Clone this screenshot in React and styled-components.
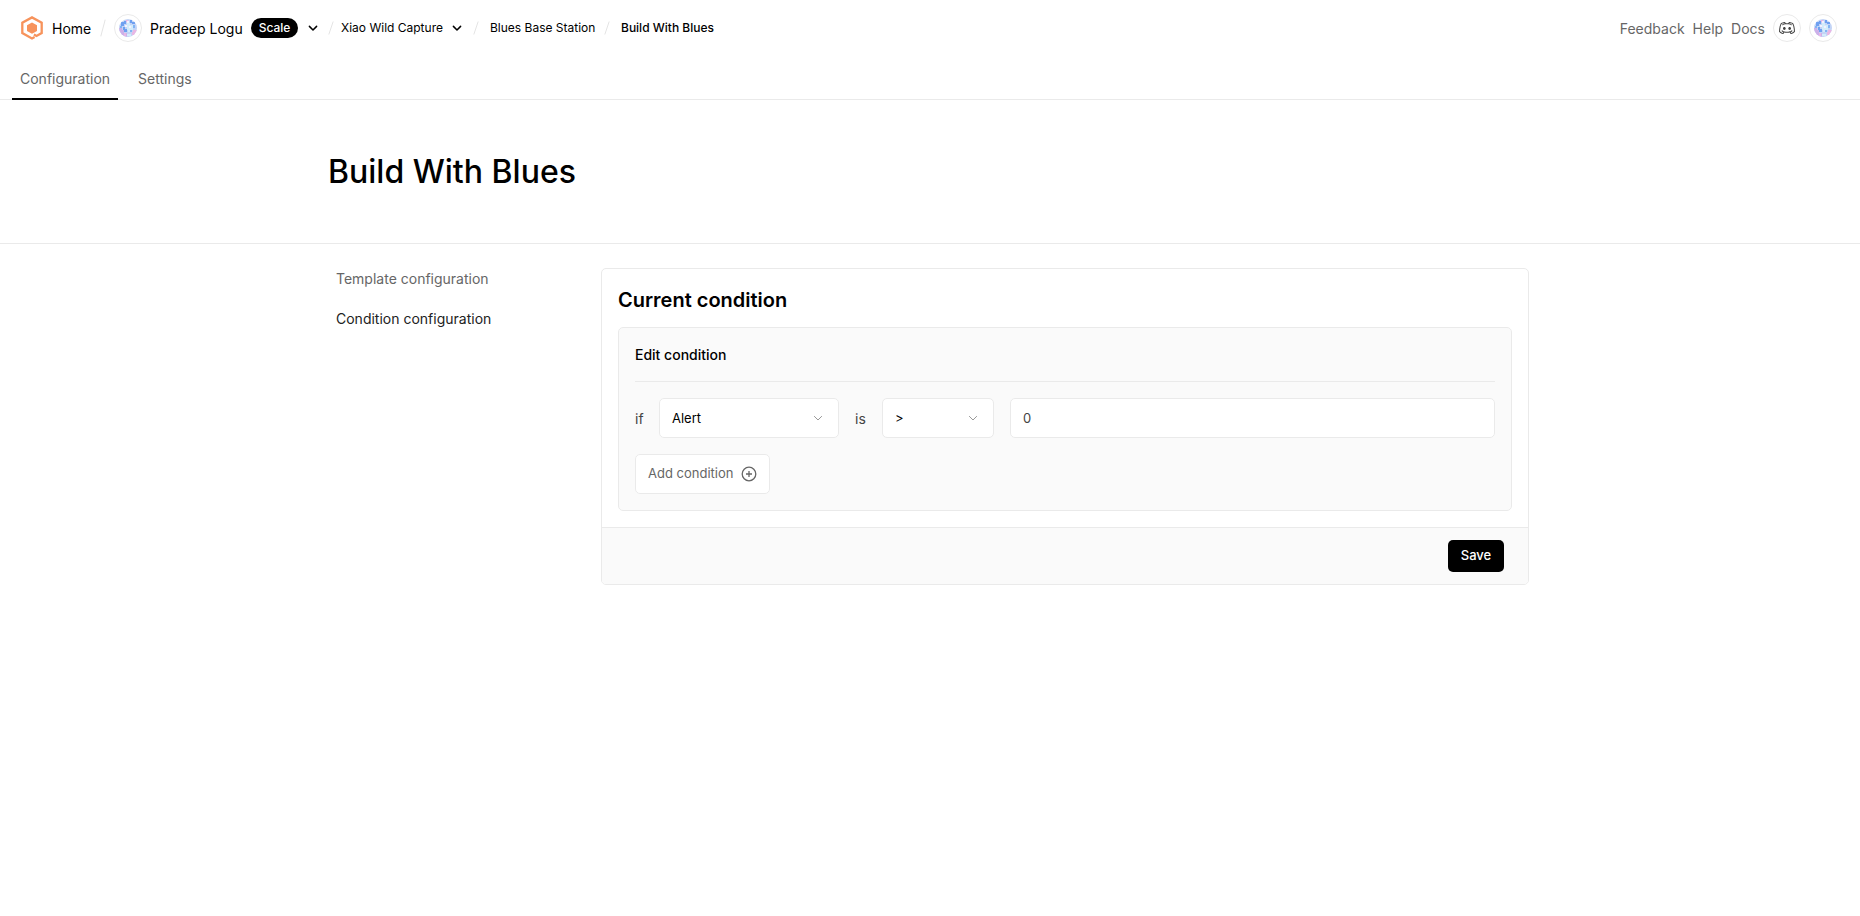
import { useState } from "react";
import styled, { createGlobalStyle } from "styled-components";
import { RxDiscordLogo } from "react-icons/rx";

const GlobalStyled = createGlobalStyle`
  * {
    box-sizing: border-box;
  }

  body {
    margin: 0;
    background: #fff;
    color: #000;
    font-family: Inter, "Liberation Sans", sans-serif;
    font-size: 14px;
  }

  button,
  input {
    font-family: inherit;
  }
`;

const Header = styled.header`
  display: flex;
  align-items: center;
  height: 56px;
  padding: 0 23px 0 20px;
`;

const Brand = styled.a`
  display: flex;
  align-items: center;
  gap: 8px;
  width: 80px;
  white-space: nowrap;
`;

const BrandName = styled.span`
  font-size: 14px;
  line-height: 20px;
  padding-top: 2px;
`;

const Slash = styled.svg`
  flex: none;
  width: 6px;
  height: ${(props) => props.$height || 14}px;
  margin-right: ${(props) => props.$gap}px;
  stroke: #e4e4e4;
`;

const Circle = styled.div`
  display: flex;
  flex: none;
  align-items: center;
  justify-content: center;
  width: 28px;
  height: 28px;
  border: 1px solid #eaeaea;
  border-radius: 50%;
  color: #444;
`;

const Owner = styled.span`
  width: 101px;
  margin-left: 8px;
  padding-top: 2px;
  line-height: 20px;
  white-space: nowrap;
`;

const Badge = styled.span`
  width: 47px;
  height: 20px;
  margin-right: 9px;
  border-radius: 10px;
  background: #000;
  color: #fff;
  font-size: 12px;
  font-weight: 500;
  line-height: 19px;
  text-align: center;
`;

const Crumb = styled.a`
  width: ${(props) => props.$width}px;
  font-size: 12px;
  font-weight: ${(props) => (props.$current ? 500 : 400)};
  line-height: 16px;
  white-space: nowrap;
`;

const Chevron = styled.svg`
  flex: none;
  width: 12px;
  height: 12px;
  margin-right: ${(props) => props.$gap || 0}px;
  fill: none;
  stroke: ${(props) => props.$color || "#000"};
  stroke-width: ${(props) => props.$stroke || 1.5};
  stroke-linecap: round;
  stroke-linejoin: round;
`;

const HeaderLinks = styled.nav`
  display: flex;
  align-items: center;
  gap: 8px;
  margin-left: auto;
`;

const HeaderLink = styled.a`
  padding-top: 2px;
  color: #666;
  line-height: 20px;
`;

const Tabs = styled.nav`
  display: flex;
  gap: 12px;
  height: 44px;
  padding-left: 12px;
  border-bottom: 1px solid #eaeaea;
`;

const Tab = styled.a`
  height: 44px;
  padding: 12px 8px;
  border-bottom: 2px solid ${(props) => (props.$active ? "#000" : "transparent")};
  color: #666;
  line-height: 22px;
`;

const Hero = styled.section`
  height: 144px;
  padding: 48px 0 0 328px;
  border-bottom: 1px solid #eaeaea;
`;

const Title = styled.h1`
  margin: 0;
  font-size: 32px;
  font-weight: 500;
  line-height: 48px;
`;

const Content = styled.main`
  display: flex;
  gap: 24px;
  width: 1200px;
  margin-left: 329px;
  padding-top: 24px;
`;

const Sidebar = styled.aside`
  width: 248px;
`;

const SidebarLink = styled.a`
  display: block;
  padding: 0 7px;
  height: 40px;
  color: ${(props) => (props.$active ? "#222" : "#666")};
  line-height: 21px;
`;

const Card = styled.section`
  flex: 1;
  overflow: hidden;
  border: 1px solid #eaeaea;
  border-radius: 5px;
`;

const CardBody = styled.div`
  padding: 16px;
`;

const CardTitle = styled.h2`
  margin: 0 0 12px;
  font-size: 20px;
  font-weight: 600;
  line-height: 30px;
`;

const Panel = styled.div`
  height: 184px;
  padding: 16px;
  border: 1px solid #eaeaea;
  border-radius: 5px;
  background: #fafafa;
`;

const PanelTitle = styled.h3`
  height: 38px;
  margin: 0 0 16px;
  border-bottom: 1px solid #eaeaea;
  font-size: 14px;
  font-weight: 500;
  line-height: 22px;
`;

const Row = styled.div`
  display: flex;
  align-items: center;
  gap: 16px;
  margin-bottom: 16px;
`;

const Word = styled.span`
  width: ${(props) => props.$width}px;
  color: #444;
`;

const Select = styled.button`
  display: flex;
  align-items: center;
  justify-content: space-between;
  width: ${(props) => props.$width}px;
  height: 40px;
  padding: 0 14px 1px 12px;
  border: 1px solid #eaeaea;
  border-radius: 5px;
  background: #fff;
  color: #000;
  font-size: 13px;
`;

const Input = styled.input`
  flex: 1;
  min-width: 0;
  height: 40px;
  padding: 0 12px 1px;
  border: 1px solid #eaeaea;
  border-radius: 5px;
  background: #fff;
  color: #444;
  font-size: 13px;
  outline: none;
`;

const AddButton = styled.button`
  display: flex;
  align-items: center;
  justify-content: space-between;
  width: 135px;
  height: 40px;
  padding: 0 12px;
  border: 1px solid #eaeaea;
  border-radius: 5px;
  background: #fff;
  color: #666;
  font-size: 13px;
  white-space: nowrap;
`;

const AddLabel = styled.span`
  padding-bottom: 2px;
`;

const CardFooter = styled.footer`
  display: flex;
  justify-content: flex-end;
  height: 57px;
  padding: 12px 24px;
  border-top: 1px solid #eaeaea;
  background: #fafafa;
`;

const SaveButton = styled.button`
  width: 56px;
  height: 32px;
  padding: 0 0 2px;
  border: 0;
  border-radius: 5px;
  background: #000;
  color: #fff;
  font-size: 13px;
  font-weight: 500;
`;

const Logo = () => (
  <svg width="24" height="24" viewBox="0 0 24 24" fill="none">
    <path
      d="M14.6 21.1 12 22.5 2.3 17.1V6.7L12 1.4l9.7 5.3v10.4l-5.2 2.9-2.6-1.6"
      stroke="#f7935c"
      strokeWidth="2.3"
    />
    <path d="M12 6.6 17 9.3v5.6l-5 2.8-5-2.8V9.3z" fill="#f7935c" />
  </svg>
);

const Globe = () => (
  <svg width="18" height="18" viewBox="0 0 18 18">
    <clipPath id="globe">
      <circle cx="9" cy="9" r="9" />
    </clipPath>
    <g clipPath="url(#globe)">
      <path fill="#c3d4f6" d="M0 0h18v18H0z" />
      <path fill="#cdb0e8" d="M0 9h3v2h2v3h3v4H0z" />
      <path fill="#6fa0f0" d="M2 3h3V2h2v3H5v2H2zM4 8h2v2h2v3H5v-2H4zM11 1h2v2h3v2h-3V4h-2z" />
      <path fill="#d3ecfb" d="M8 4h3v2h3v5h-2v2H9v-2H8zM8 15h4v2H8z" />
      <path fill="#e9b7e4" d="M14 11h4v3h-2v2h-3v-3h1zM5 14h2v3H5zM7 1h2v2H7z" />
      <path fill="#82b4f3" d="M14 6h2v3h-2zM11 11h2v2h-2zM1 7h2v2H1z" />
      <path fill="#f4f2fd" d="M8 2h2v2H8zM6 6h2v2H6zM10 7h2v2h-2z" />
    </g>
  </svg>
);

const Separator = ({ height, gap }) => (
  <Slash $height={height} $gap={gap} viewBox="0 0 6 14" preserveAspectRatio="none">
    <path d="M5.2.5.8 13.5" />
  </Slash>
);

const ChevronDown = ({ gap, color, stroke }) => (
  <Chevron $gap={gap} $color={color} $stroke={stroke} viewBox="0 0 12 12">
    <path d="m2.4 4.4 3.6 3.6 3.6-3.6" />
  </Chevron>
);

const App = () => {
  const [value, setValue] = useState("0");

  return (
    <>
      <GlobalStyled />
      <Header>
        <Brand>
          <Logo />
          <BrandName>Home</BrandName>
        </Brand>
        <Separator height={18} gap={8} />
        <Circle>
          <Globe />
        </Circle>
        <Owner>Pradeep Logu</Owner>
        <Badge>Scale</Badge>
        <ChevronDown gap={9} />
        <Separator gap={7} />
        <Crumb $width={110}>Xiao Wild Capture</Crumb>
        <ChevronDown gap={10} />
        <Separator gap={11} />
        <Crumb $width={114}>Blues Base Station</Crumb>
        <Separator gap={11} />
        <Crumb $current>Build With Blues</Crumb>
        <HeaderLinks>
          <HeaderLink>Feedback</HeaderLink>
          <HeaderLink>Help</HeaderLink>
          <HeaderLink>Docs</HeaderLink>
          <Circle>
            <RxDiscordLogo size={16} />
          </Circle>
          <Circle>
            <Globe />
          </Circle>
        </HeaderLinks>
      </Header>
      <Tabs>
        <Tab $active>Configuration</Tab>
        <Tab>Settings</Tab>
      </Tabs>
      <Hero>
        <Title>Build With Blues</Title>
      </Hero>
      <Content>
        <Sidebar>
          <SidebarLink>Template configuration</SidebarLink>
          <SidebarLink $active>Condition configuration</SidebarLink>
        </Sidebar>
        <Card>
          <CardBody>
            <CardTitle>Current condition</CardTitle>
            <Panel>
              <PanelTitle>Edit condition</PanelTitle>
              <Row>
                <Word $width={8}>if</Word>
                <Select $width={180}>
                  Alert
                  <ChevronDown color="#999" stroke={1} />
                </Select>
                <Word $width={11}>is</Word>
                <Select $width={112}>
                  &gt;
                  <ChevronDown color="#999" stroke={1} />
                </Select>
                <Input value={value} onChange={(e) => setValue(e.target.value)} />
              </Row>
              <AddButton>
                <AddLabel>Add condition</AddLabel>
                <svg width="16" height="16" viewBox="0 0 16 16" fill="none" stroke="#666" strokeWidth="1.3">
                  <circle cx="8" cy="8" r="6.8" />
                  <path d="M8 5v6M5 8h6" />
                </svg>
              </AddButton>
            </Panel>
          </CardBody>
          <CardFooter>
            <SaveButton>Save</SaveButton>
          </CardFooter>
        </Card>
      </Content>
    </>
  );
};

export default App;
